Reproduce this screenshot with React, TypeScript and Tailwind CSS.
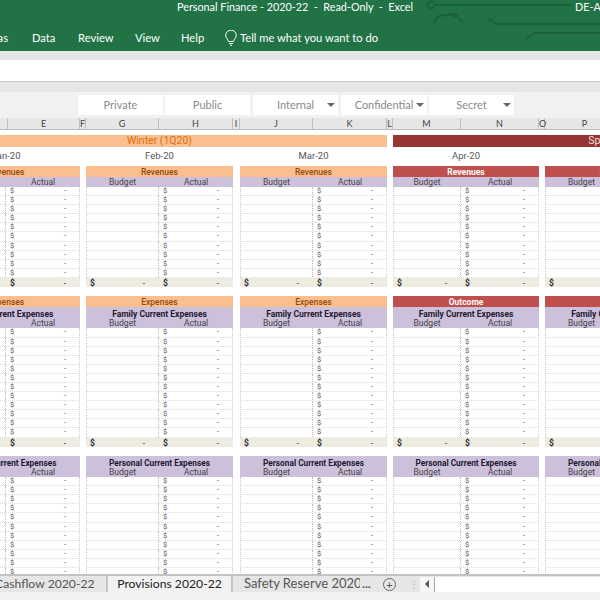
import React from "react";

const sheetFont = "font-['Roboto','Noto_Sans',sans-serif]";

const columns: [string, number][] = [
  ["", 8], ["E", 72], ["F", 6], ["G", 73], ["H", 74], ["I", 7], ["J", 73], ["K", 74], ["L", 6], ["M", 68], ["N", 78], ["O", 6], ["P", 80],
];

type Month = { label: string; budget: number; actual: number; second: string; red: boolean; gap: string };
const months: Month[] = [
  { label: "Jan-20", budget: 74, actual: 74, second: "Expenses", red: false, gap: "ml-0" },
  { label: "Feb-20", budget: 73, actual: 74, second: "Expenses", red: false, gap: "ml-[6px]" },
  { label: "Mar-20", budget: 73, actual: 74, second: "Expenses", red: false, gap: "ml-[7px]" },
  { label: "Apr-20", budget: 68, actual: 78, second: "Outcome", red: true, gap: "ml-[6px]" },
  { label: "May-20", budget: 73, actual: 74, second: "Outcome", red: true, gap: "ml-[6px]" },
];

function Rows({ m, count }: { m: Month; count: number }) {
  return (
    <div className="border-x border-dotted border-[#c8c8c8]">
      {Array.from({ length: count }).map((_, i) => (
        <div key={i} className="flex h-[9.1px] border-b border-dotted border-[#dcdcdc] text-[7.5px] leading-[8px] text-[#555]">
          <div className="shrink-0 border-r border-dotted border-[#bdbdbd]" style={{ width: m.budget - 1 }} />
          <div className="flex flex-1 justify-between pl-[4px] pr-[13px]">
            <span>$</span>
            <span>-</span>
          </div>
        </div>
      ))}
    </div>
  );
}

function Total({ m }: { m: Month }) {
  return (
    <div className="flex h-[9.5px] bg-[#eeece1] text-[8.5px] font-bold leading-[10px] text-[#333]">
      <div className="flex shrink-0 justify-between pl-[4px] pr-[14px]" style={{ width: m.budget }}>
        <span>$</span>
        <span className="font-normal">-</span>
      </div>
      <div className="flex flex-1 justify-between pl-[4px] pr-[14px]">
        <span>$</span>
        <span className="font-normal">-</span>
      </div>
    </div>
  );
}

function SubHead({ m }: { m: Month }) {
  return (
    <div className="flex h-[10px] text-[8.5px] leading-[10px] text-[#444]">
      <div className="shrink-0 text-center" style={{ width: m.budget }}>Budget</div>
      <div className="flex-1 text-center">Actual</div>
    </div>
  );
}

function MonthColumn({ m }: { m: Month }) {
  const head = m.red ? "bg-[#c0504d] text-white font-bold" : "bg-[#fabf8f] text-[#974706] font-medium";
  const width = m.budget + m.actual;
  return (
    <div className={`shrink-0 ${m.gap}`} style={{ width }}>
      <div className="flex h-[19px] items-center justify-center text-[9.5px] text-[#555]">{m.label}</div>
      <div className={`h-[11px] text-center text-[8.5px] font-bold leading-[12px] ${head}`}>Revenues</div>
      <div className="bg-[#ccc0da]"><SubHead m={m} /></div>
      <Rows m={m} count={10} />
      <Total m={m} />
      <div className={`mt-[9px] h-[11px] text-center text-[8.5px] leading-[12px] ${head}`}>{m.second}</div>
      <div className="h-[21px] bg-[#ccc0da]">
        <div className="h-[11px] pt-[2px] text-center text-[8.5px] font-bold leading-[10px] text-[#1f1a30]">Family Current Expenses</div>
        <SubHead m={m} />
      </div>
      <Rows m={m} count={12} />
      <Total m={m} />
      <div className="mt-[9px] h-[21px] bg-[#ccc0da]">
        <div className="h-[11px] pt-[2px] text-center text-[8.3px] font-bold leading-[10px] text-[#1f1a30]">Personal Current Expenses</div>
        <SubHead m={m} />
      </div>
      <Rows m={m} count={11} />
    </div>
  );
}

function Chip({ label, arrow, cls }: { label: string; arrow?: boolean; cls: string }) {
  return (
    <div className={`relative flex h-[20px] items-center justify-center bg-white text-[11px] text-[#8a8a8a] ${cls}`}>
      <span>{label}</span>
      {arrow && <span className="absolute right-[3px] top-[8px] h-0 w-0 border-x-[4px] border-t-[4px] border-x-transparent border-t-[#666]" />}
    </div>
  );
}

export default function App() {
  return (
    <div className="flex h-[600px] w-[600px] flex-col overflow-hidden bg-white font-['Lato','Open_Sans',sans-serif]">
      <div className="relative h-[51px] shrink-0 overflow-hidden bg-[#217346] text-white">
        <svg aria-hidden className="absolute left-0 top-0" width="600" height="51" fill="none" stroke="#1c6139" strokeWidth="2">
          <circle cx="431" cy="5" r="3.5" />
          <path d="M435 5H572" />
          <path d="M434 23c2-11 23-11 29 0M447 16c2-3 8-3 11 0" />
          <path d="M487 21l3-2 6 5H600" />
          <path d="M526 39l8-6H600" />
        </svg>
        <div className="relative flex h-[14px] items-center text-[10.8px]">
          <span className="ml-[177px] whitespace-pre">Personal Finance - 2020-22  -  Read-Only  -  Excel</span>
          <span className="ml-auto w-[25px] overflow-hidden whitespace-nowrap">DE-A</span>
        </div>
        <div className="relative mt-[11px] flex h-[26px] items-center whitespace-nowrap text-[11.2px]">
          <span className="ml-[-42px] w-[50px] text-right">Formulas</span>
          <span className="ml-[24px] w-[46px]">Data</span>
          <span className="w-[57px]">Review</span>
          <span className="w-[46px]">View</span>
          <span className="w-[44px]">Help</span>
          <svg width="12" height="16" viewBox="0 0 12 16" fill="none" stroke="white" strokeWidth="1" className="mr-[3px]">
            <path d="M3.5 11.5C3 9 .7 8 .7 5.4a5.3 5.3 0 0 1 10.6 0C11.3 8 9 9 8.5 11.5ZM4 13.5h4M5 15.2h2" />
          </svg>
          <span>Tell me what you want to do</span>
        </div>
      </div>

      <div className="h-[9px] shrink-0 bg-[#e6e6e6]" />
      <div className="h-[21px] shrink-0 bg-white" />
      <div className="h-[11px] shrink-0 border-t border-[#c6c6c6] bg-[#e6e6e6]" />

      <div className="flex h-[26px] shrink-0 items-start bg-[#f1f1f1] pt-[3px]">
        <Chip label="Private" cls="ml-[78px] w-[85px]" />
        <Chip label="Public" cls="ml-[2px] w-[85px]" />
        <Chip label="Internal" arrow cls="ml-[3px] w-[85px]" />
        <Chip label="Confidential" arrow cls="ml-[3px] w-[86px]" />
        <Chip label="Secret" arrow cls="ml-[2px] w-[85px]" />
      </div>

      <div className="flex h-[12px] shrink-0 border-b border-[#bdbdbd] bg-[#e6e6e6] text-[9px] leading-[11px] text-[#444]">
        {columns.map(([c, w], i) => (
          <div key={i} className="shrink-0 border-r border-[#bfbfbf] text-center" style={{ width: w }}>{c}</div>
        ))}
      </div>

      <div className={`min-h-0 flex-1 overflow-hidden pt-[5px] ${sheetFont}`}>
        <div className="ml-[-68px] flex h-[12px] w-[1000px]">
          <div className="w-[455px] bg-[#fabf8f] text-center text-[10.5px] leading-[12px] text-[#e26b0a]">Winter (1Q20)</div>
          <div className="ml-[6px] w-[455px] bg-[#963634] text-center text-[10.5px] leading-[12px] text-[#f2dcdb]">Spring (2Q20)</div>
        </div>
        <div className="ml-[-68px] flex w-[1000px]">
          {months.map((m) => <MonthColumn key={m.label} m={m} />)}
        </div>
      </div>

      <div className="flex h-[18px] shrink-0 items-center border-t-2 border-[#c4c4c4] bg-[#e6e6e6] text-[12.2px] text-[#555]">
        <span className="ml-[-5px] w-[111px] whitespace-nowrap">Cashflow 2020-22</span>
        <div className="flex h-full w-[127px] items-center justify-center border-x-2 border-[#c4c4c4] bg-[#f2f2f2] text-[#222]">Provisions 2020-22</div>
        <span className="ml-[11px] w-[116px] overflow-hidden whitespace-nowrap text-[13px]">Safety Reserve 2020-2</span>
        <span className="w-[23px] pl-[2px] font-bold">...</span>
        <span className="flex h-[13px] w-[13px] items-center justify-center rounded-full border border-[#666] text-[11px] leading-none">+</span>
        <span className="ml-[13px] w-[11px] text-[10px] text-[#aaa]">⋮</span>
        <div className="flex h-[15px] w-[14px] items-center justify-center bg-[#f7f7f7]">
          <span className="h-0 w-0 border-y-[4px] border-r-[4px] border-y-transparent border-r-[#555]" />
        </div>
        <div className="h-[15px] flex-1 border-l border-[#aaa] bg-white" />
      </div>
      <div className="h-[8px] shrink-0 bg-[#f1f1f1]" />
    </div>
  );
}
